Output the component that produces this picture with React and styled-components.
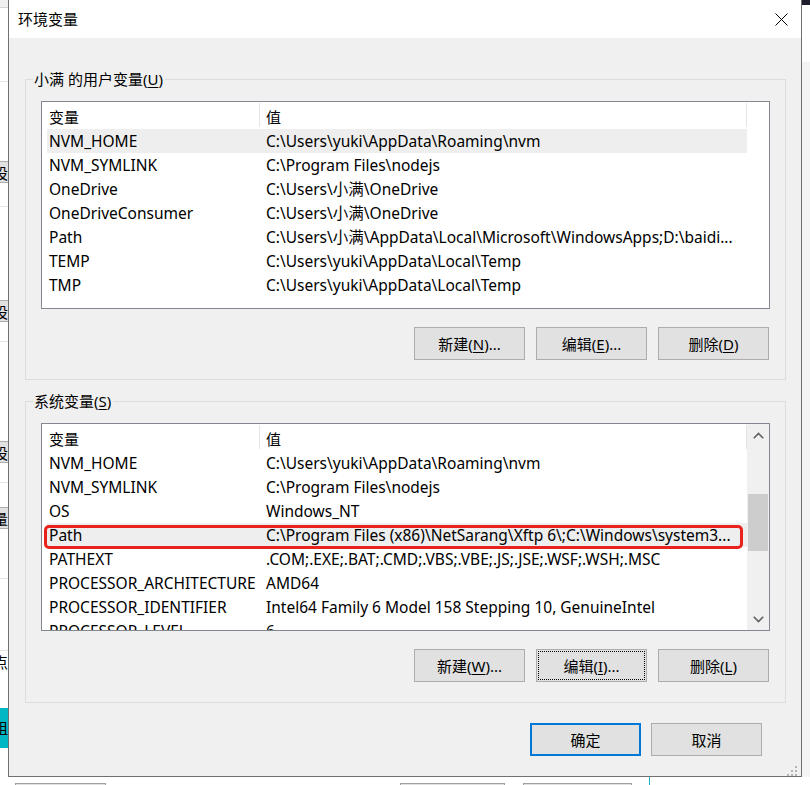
import React from 'react';
import styled, { createGlobalStyle } from 'styled-components';

const FONT = `"Noto Sans", "Noto Sans CJK SC", sans-serif`;

const Global = createGlobalStyle`
  html, body { margin: 0; padding: 0; background: #fff; }
  body { font-family: ${FONT}; font-size: 15px; color: #000; overflow: hidden; }
  * { box-sizing: border-box; }
`;

const Screen = styled.div`
  width: 810px;
  height: 785px;
  display: flex;
  flex-direction: column;
  overflow: hidden;
  background: #fff;
`;

const TopRow = styled.div`
  display: flex;
  height: 777px;
  flex: none;
`;

const LeftStrip = styled.div`
  width: 8px;
  flex: none;
  display: flex;
  flex-direction: column;
  overflow: hidden;
  background: #fff;
`;

const StripPiece = styled.div`
  flex: none;
  height: ${(p) => p.$h}px;
  background: ${(p) => p.$bg || '#fff'};
  border-bottom: ${(p) => (p.$line ? `1px solid ${p.$line}` : 'none')};
  border-top: ${(p) => (p.$top ? `1px solid ${p.$top}` : 'none')};
  overflow: hidden;
  white-space: nowrap;
  font-size: 15px;
  line-height: ${(p) => p.$h}px;
  color: ${(p) => p.$color || '#000'};
`;

const StripText = styled.span`
  display: inline-block;
  margin-left: -7px;
`;

const RightStrip = styled.div`
  width: 8px;
  flex: none;
  display: flex;
  flex-direction: column;
  background: #f4f4f4;
`;

const Dialog = styled.div`
  width: 794px;
  flex: none;
  border: 1px solid #707070;
  border-top: none;
  display: flex;
  flex-direction: column;
  position: relative;
  background: #f0f0f0;
`;

const TitleBar = styled.div`
  height: 38px;
  flex: none;
  background: #fff;
  display: flex;
  align-items: center;
  justify-content: space-between;
  padding-left: 9px;
`;

const Title = styled.span`
  font-size: 15px;
  line-height: 20px;
`;

const CloseButton = styled.div`
  width: 40px;
  height: 38px;
  display: flex;
  align-items: center;
  justify-content: center;
`;

const Body = styled.div`
  flex: 1;
  display: flex;
  flex-direction: column;
  padding: 31px 15px 0 16px;
`;

const Group = styled.fieldset`
  margin: 0;
  padding: 0;
  border: 1px solid #dcdcdc;
  min-inline-size: 0;
  margin-top: ${(p) => p.$mt || 0}px;
`;

const Legend = styled.legend`
  margin-left: 7px;
  padding: 0 2px 0 1px;
  font-size: 15px;
  line-height: 20px;
`;

const GroupInner = styled.div`
  padding: 12px 15px ${(p) => p.$pb || 19}px 15px;
  display: flex;
  flex-direction: column;
`;

const ListBox = styled.div`
  height: 208px;
  border: 1px solid #828790;
  background: #fff;
  display: flex;
  padding-left: 5px;
  overflow: hidden;
`;

const Table = styled.div`
  width: 700px;
  flex: none;
  display: flex;
  flex-direction: column;
`;

const HeaderRow = styled.div`
  height: 27px;
  flex: none;
  display: flex;
`;

const HeaderCell = styled.div`
  position: relative;
  width: ${(p) => p.$w}px;
  padding-left: ${(p) => p.$pl}px;
  padding-top: 3px;
  line-height: 24px;
  font-size: 15px;
  &::after {
    content: '';
    position: absolute;
    right: 0;
    top: 1px;
    bottom: 2px;
    width: 1px;
    background: #e5e5e5;
  }
`;

const Row = styled.div`
  position: relative;
  height: 24px;
  flex: none;
  display: flex;
  background: ${(p) => (p.$selected ? '#eeeeee' : 'transparent')};
`;

const Cell = styled.div`
  width: ${(p) => p.$w}px;
  flex: none;
  padding-left: ${(p) => p.$pl}px;
  line-height: 24px;
  font-size: 15.5px;
  white-space: nowrap;
  overflow: hidden;
`;

const Highlight = styled.div`
  position: absolute;
  left: -3px;
  top: 2px;
  width: 699px;
  height: 24px;
  border: 3px solid #e8231e;
  border-radius: 5px;
  pointer-events: none;
`;

const ScrollBar = styled.div`
  width: 22px;
  flex: none;
  background: #f0f0f0;
  display: flex;
  flex-direction: column;
`;

const ScrollArrow = styled.div`
  height: 22px;
  flex: none;
  display: flex;
  align-items: center;
  justify-content: center;
`;

const ScrollTrack = styled.div`
  flex: 1;
  display: flex;
  flex-direction: column;
  padding: 0 1px;
`;

const ScrollThumb = styled.div`
  margin-top: ${(p) => p.$top}px;
  height: ${(p) => p.$h}px;
  background: #cdcdcd;
`;

const ButtonRow = styled.div`
  display: flex;
  justify-content: flex-end;
  gap: 11px;
  margin-top: 18px;
  padding-right: 1px;
`;

const Button = styled.div`
  width: 111px;
  height: 33px;
  display: flex;
  align-items: center;
  justify-content: center;
  background: #e1e1e1;
  border: ${(p) => (p.$default ? '2px solid #0078d7' : '1px solid #adadad')};
  font-size: 15px;
  outline: ${(p) => (p.$focus ? '1px dotted #000' : 'none')};
  outline-offset: -3px;
`;

const Footer = styled.div`
  display: flex;
  justify-content: flex-end;
  gap: 10px;
  margin-top: 20px;
  padding-right: 24px;
`;

const Grip = styled.div`
  position: absolute;
  right: 2px;
  bottom: 2px;
  width: 12px;
  height: 12px;
`;

const BottomStrip = styled.div`
  height: 8px;
  flex: none;
  display: flex;
  align-items: flex-end;
  background: #fff;
`;

const BottomBox = styled.div`
  margin-left: ${(p) => p.$ml}px;
  width: ${(p) => p.$w}px;
  height: 2px;
  flex: none;
  border: 1px solid #a0a0a0;
  border-bottom: none;
  background: #e1e1e1;
`;

const TealLine = styled.div`
  margin-left: ${(p) => p.$ml}px;
  width: 1px;
  height: 8px;
  background: #17b3c0;
  flex: none;
`;

const Ul = styled.u`
  text-decoration-thickness: 1px;
  text-underline-offset: 2px;
`;

const userVars = [
  ['NVM_HOME', 'C:\\Users\\yuki\\AppData\\Roaming\\nvm'],
  ['NVM_SYMLINK', 'C:\\Program Files\\nodejs'],
  ['OneDrive', 'C:\\Users\\小满\\OneDrive'],
  ['OneDriveConsumer', 'C:\\Users\\小满\\OneDrive'],
  ['Path', 'C:\\Users\\小满\\AppData\\Local\\Microsoft\\WindowsApps;D:\\baidi...'],
  ['TEMP', 'C:\\Users\\yuki\\AppData\\Local\\Temp'],
  ['TMP', 'C:\\Users\\yuki\\AppData\\Local\\Temp'],
];

const sysVars = [
  ['NVM_HOME', 'C:\\Users\\yuki\\AppData\\Roaming\\nvm'],
  ['NVM_SYMLINK', 'C:\\Program Files\\nodejs'],
  ['OS', 'Windows_NT'],
  ['Path', 'C:\\Program Files (x86)\\NetSarang\\Xftp 6\\;C:\\Windows\\system3...'],
  ['PATHEXT', '.COM;.EXE;.BAT;.CMD;.VBS;.VBE;.JS;.JSE;.WSF;.WSH;.MSC'],
  ['PROCESSOR_ARCHITECTURE', 'AMD64'],
  ['PROCESSOR_IDENTIFIER', 'Intel64 Family 6 Model 158 Stepping 10, GenuineIntel'],
  ['PROCESSOR_LEVEL', '6'],
];

function VarTable({ rows, selected, marked }) {
  return (
    <Table>
      <HeaderRow>
        <HeaderCell $w={213} $pl={2}>变量</HeaderCell>
        <HeaderCell $w={487} $pl={6}>值</HeaderCell>
      </HeaderRow>
      {rows.map(([k, v], i) => (
        <Row key={k + i} $selected={i === selected}>
          <Cell $w={213} $pl={2}>{k}</Cell>
          <Cell $w={487} $pl={6}>{v}</Cell>
          {i === marked && <Highlight />}
        </Row>
      ))}
    </Table>
  );
}

const Chevron = ({ up }) => (
  <svg width="11" height="7" viewBox="0 0 11 7">
    <path
      d={up ? 'M0.8 6.2 L5.5 1.5 L10.2 6.2' : 'M0.8 0.8 L5.5 5.5 L10.2 0.8'}
      fill="none"
      stroke="#606060"
      strokeWidth="1.6"
    />
  </svg>
);

export default function App() {
  return (
    <>
      <Global />
      <Screen>
        <TopRow>
          <LeftStrip>
            <StripPiece $h={8} $bg="#f0f0f0" $line="#d4d4d4" />
            <StripPiece $h={74} $line="#e4e4e4" />
            <StripPiece $h={79} />
            <StripPiece $h={22} $bg="#e1e1e1" $top="#adadad" $line="#adadad"><StripText>设</StripText></StripPiece>
            <StripPiece $h={24} $line="#e4e4e4" />
            <StripPiece $h={93} />
            <StripPiece $h={22} $bg="#e1e1e1" $top="#adadad" $line="#adadad"><StripText>设</StripText></StripPiece>
            <StripPiece $h={20} $line="#e4e4e4" />
            <StripPiece $h={99} />
            <StripPiece $h={22} $bg="#e1e1e1" $top="#adadad" $line="#adadad"><StripText>设</StripText></StripPiece>
            <StripPiece $h={20} $line="#e4e4e4" />
            <StripPiece $h={24} />
            <StripPiece $h={22} $bg="#e1e1e1" $top="#adadad" $line="#adadad"><StripText>量</StripText></StripPiece>
            <StripPiece $h={50} $line="#e4e4e4" />
            <StripPiece $h={72} $line="#e4e4e4" />
            <StripPiece $h={22}><StripText>点</StripText></StripPiece>
            <StripPiece $h={35} />
            <StripPiece $h={40} $bg="#00b7c3"><StripText>组</StripText></StripPiece>
            <StripPiece $h={20} />
          </LeftStrip>

          <Dialog>
            <TitleBar>
              <Title>环境变量</Title>
              <CloseButton>
                <svg width="13" height="13" viewBox="0 0 13 13">
                  <path d="M0.5 0.5 L12.5 12.5 M12.5 0.5 L0.5 12.5" stroke="#000" strokeWidth="1" fill="none" />
                </svg>
              </CloseButton>
            </TitleBar>
            <Body>
              <Group>
                <Legend>小满 的用户变量(<Ul>U</Ul>)</Legend>
                <GroupInner>
                  <ListBox>
                    <VarTable rows={userVars} selected={0} marked={-1} />
                  </ListBox>
                  <ButtonRow>
                    <Button>新建(<Ul>N</Ul>)...</Button>
                    <Button>编辑(<Ul>E</Ul>)...</Button>
                    <Button>删除(<Ul>D</Ul>)</Button>
                  </ButtonRow>
                </GroupInner>
              </Group>

              <Group $mt={11}>
                <Legend>系统变量(<Ul>S</Ul>)</Legend>
                <GroupInner $pb={20}>
                  <ListBox>
                    <VarTable rows={sysVars} selected={3} marked={3} />
                    <ScrollBar>
                      <ScrollArrow><Chevron up /></ScrollArrow>
                      <ScrollTrack>
                        <ScrollThumb $top={48} $h={57} />
                      </ScrollTrack>
                      <ScrollArrow><Chevron /></ScrollArrow>
                    </ScrollBar>
                  </ListBox>
                  <ButtonRow>
                    <Button>新建(<Ul>W</Ul>)...</Button>
                    <Button $focus>编辑(<Ul>I</Ul>)...</Button>
                    <Button>删除(<Ul>L</Ul>)</Button>
                  </ButtonRow>
                </GroupInner>
              </Group>

              <Footer>
                <Button $default>确定</Button>
                <Button>取消</Button>
              </Footer>
            </Body>
            <Grip>
              <svg width="12" height="12" viewBox="0 0 12 12" fill="#b4b4b4">
                <rect x="8" y="0" width="2" height="2" />
                <rect x="4" y="4" width="2" height="2" />
                <rect x="8" y="4" width="2" height="2" />
                <rect x="0" y="8" width="2" height="2" />
                <rect x="4" y="8" width="2" height="2" />
                <rect x="8" y="8" width="2" height="2" />
              </svg>
            </Grip>
          </Dialog>

          <RightStrip>
            <StripPiece $h={5} $bg="#1d1d2b" />
            <StripPiece $h={57} $bg="#ffffff" />
            <StripPiece $h={715} $bg="#f4f4f4" />
          </RightStrip>
        </TopRow>
        <BottomStrip>
          <BottomBox $ml={15} $w={91} />
          <BottomBox $ml={294} $w={105} />
          <BottomBox $ml={18} $w={109} />
          <TealLine $ml={17} />
        </BottomStrip>
      </Screen>
    </>
  );
}
